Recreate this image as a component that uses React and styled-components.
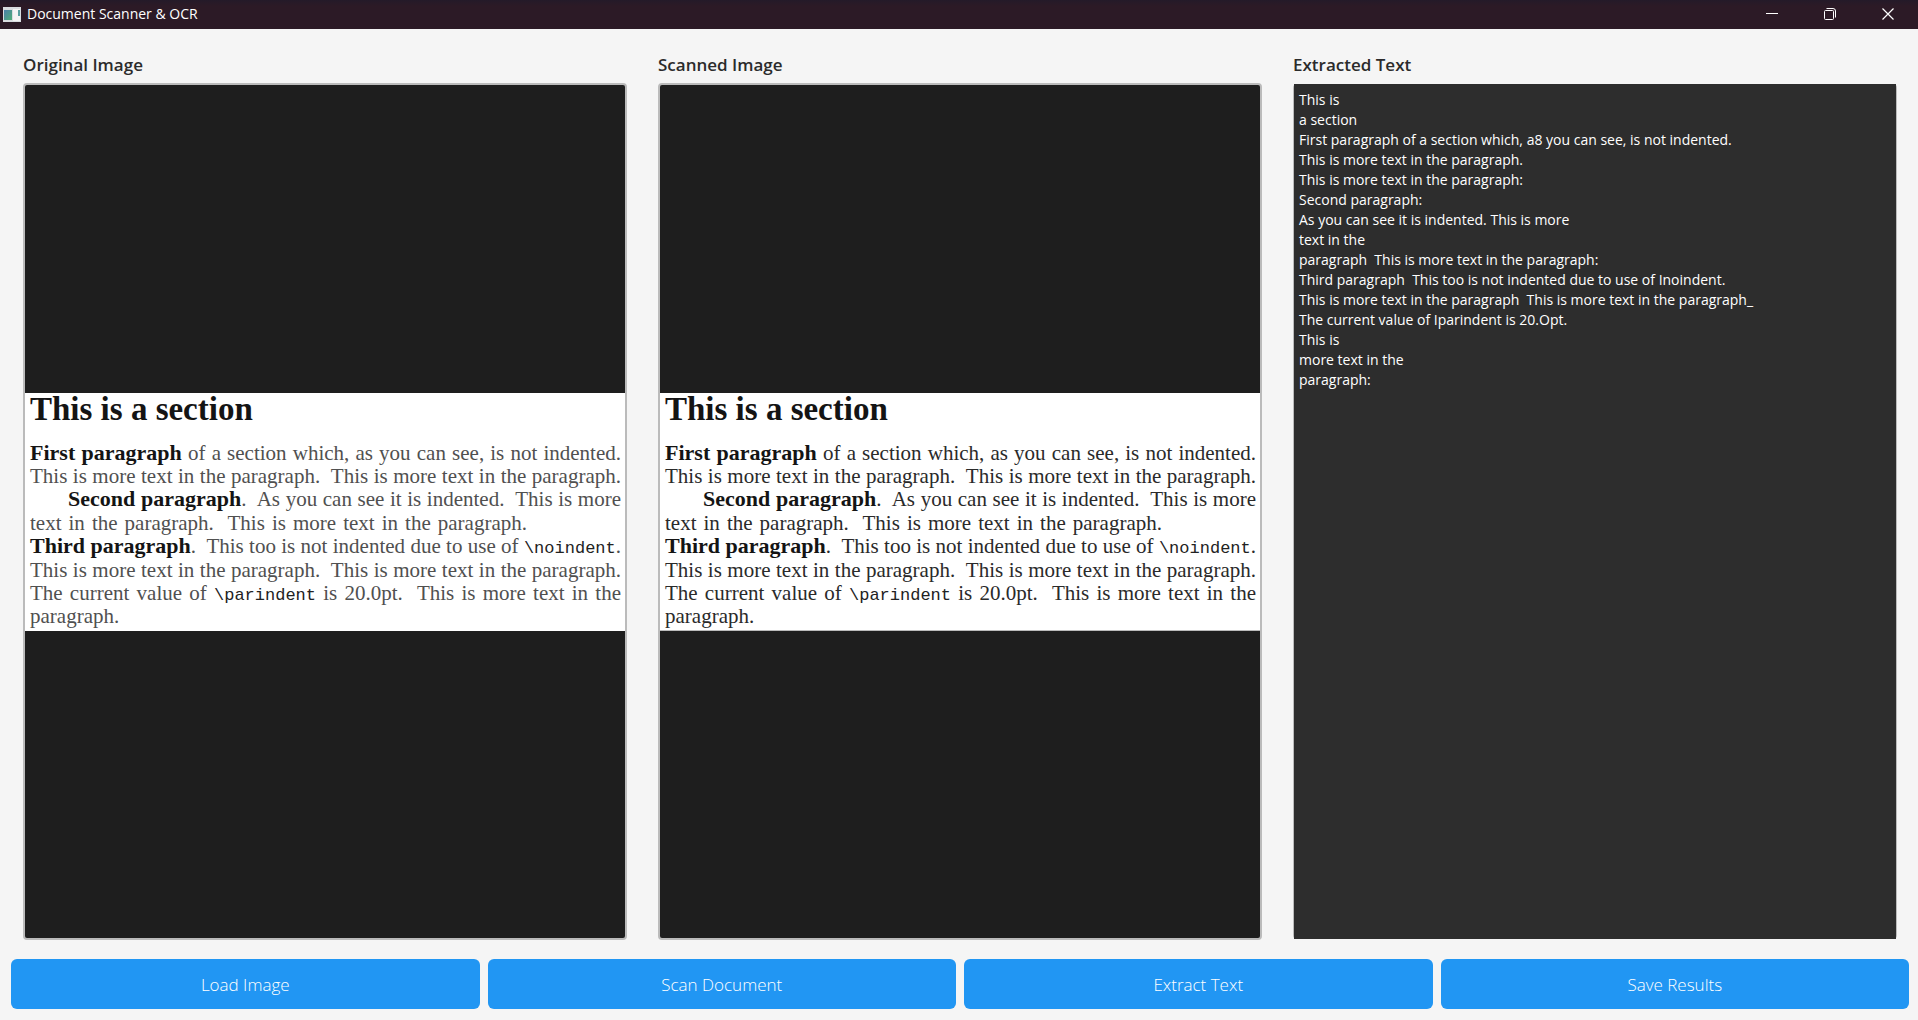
import React from "react";
import styled, { createGlobalStyle } from "styled-components";

const GlobalStyle = createGlobalStyle`
  *, *::before, *::after { box-sizing: border-box; }
  body {
    margin: 0;
    background: #f5f5f5;
    font-family: "Open Sans", "Noto Sans", sans-serif;
  }
`;

const Window = styled.div`
  display: flex;
  flex-direction: column;
  min-height: 100vh;
`;

const TitleBar = styled.header`
  display: flex;
  align-items: center;
  height: 29px;
  padding: 0 1px 1px 3px;
  background: linear-gradient(#241a29, #2c1a26 6px);
  color: #ffffff;
`;

const AppTitle = styled.h1`
  flex: 1;
  margin: 0 0 0 6px;
  font-size: 14px;
  font-weight: 400;
  line-height: 20px;
`;

const WindowButton = styled.button`
  display: flex;
  align-items: center;
  justify-content: center;
  width: 58px;
  height: 28px;
  padding: 0;
  border: 0;
  background: transparent;
  color: #ffffff;
`;

const Panels = styled.main`
  flex: 1;
  display: grid;
  grid-template-columns: repeat(3, minmax(0, 1fr));
  gap: 31px;
  padding: 24px 21px 19px 23px;
`;

const Panel = styled.section`
  display: flex;
  flex-direction: column;
`;

const PanelTitle = styled.h2`
  margin: 0 0 6px;
  color: #2b2b2b;
  font-size: 17px;
  font-weight: 650;
  line-height: 24px;
`;

const ImageFrame = styled.div`
  flex: 1;
  display: flex;
  align-items: center;
  border: 2px solid #bbbbbb;
  border-radius: 4px;
  background: #1e1e1e;
`;

const Page = styled.article`
  flex: 1;
  height: 238px;
  padding: 0 4px 0 5px;
  border-bottom: 1px solid ${(p) => (p.$scanned ? "#bbbbbb" : "#ffffff")};
  background: #ffffff;
  color: ${(p) => (p.$scanned ? "#2a2a2a" : "#505050")};
  font-family: "Liberation Serif", serif;
  font-size: 21px;
`;

const PageHeading = styled.h3`
  margin: 0;
  height: 49px;
  color: #141414;
  font-size: 33px;
  font-weight: 700;
  line-height: 32px;
`;

const PageBody = styled.div`
  display: grid;
  grid-auto-rows: 1fr;
  height: 187px;
  align-items: center;
`;

const PageLine = styled.div`
  line-height: 23px;
  white-space: nowrap;
  padding-left: ${(p) => (p.$indent ? "38px" : "0")};
  padding-right: ${(p) => (p.$short ? "94px" : "0")};
  text-align: justify;
  text-align-last: ${(p) => (p.$last ? "left" : "justify")};
`;

const Strong = styled.strong`
  color: #141414;
  font-size: 22px;
  line-height: 1;
`;

const Code = styled.code`
  color: #222222;
  font-family: "Liberation Mono", monospace;
  font-size: 17px;
  line-height: 1;
`;

const TextFrame = styled.div`
  flex: 1;
  display: flex;
  margin: 1px 0;
  padding: 0 1px;
  border-radius: 4px;
  background: #bbbbbb;
`;

const ExtractedText = styled.textarea`
  flex: 1;
  min-width: 0;
  padding: 6px 5px;
  border: 0;
  outline: 0;
  resize: none;
  background: #2d2d2d;
  color: #ffffff;
  font-family: inherit;
  font-size: 14px;
  line-height: 20px;
`;

const Actions = styled.footer`
  display: grid;
  grid-template-columns: repeat(4, minmax(0, 1fr));
  gap: 8px;
  padding: 0 9px 11px 11px;
`;

const ActionButton = styled.button`
  height: 50px;
  border: 0;
  border-radius: 6px;
  background: #2196f3;
  color: #ffffff;
  font-family: inherit;
  font-size: 17px;
  font-weight: 350;
`;

const extracted = [
  "This is",
  "a section",
  "First paragraph of a section which, a8 you can see, is not indented.",
  "This is more text in the paragraph.",
  "This is more text in the paragraph:",
  "Second paragraph:",
  "As you can see it is indented. This is more",
  "text in the",
  "paragraph  This is more text in the paragraph:",
  "Third paragraph  This too is not indented due to use of Inoindent.",
  "This is more text in the paragraph  This is more text in the paragraph_",
  "The current value of Iparindent is 20.Opt.",
  "This is",
  "more text in the",
  "paragraph:",
].join("\n");

function AppIcon() {
  return (
    <svg width="18" height="15" viewBox="0 0 18 15" aria-hidden="true">
      <defs>
        <linearGradient id="pane" x1="0" y1="0" x2="1" y2="1">
          <stop offset="0" stopColor="#4a7fa8" />
          <stop offset="1" stopColor="#4fae78" />
        </linearGradient>
      </defs>
      <rect width="18" height="15" fill="#d9dde0" />
      <rect x="1" y="3" width="8" height="10" fill="url(#pane)" />
      <rect x="10" y="2" width="7" height="12" fill="#f4f4f4" />
      <rect x="15" y="3" width="2" height="6" fill="#5a9fa0" />
    </svg>
  );
}

function ScannedPage({ scanned }) {
  return (
    <Page $scanned={scanned}>
      <PageHeading>This is a section</PageHeading>
      <PageBody>
        <PageLine>
          <Strong>First paragraph</Strong> of a section which, as you can see, is not indented.
        </PageLine>
        <PageLine>This is more text in the paragraph.&nbsp; This is more text in the paragraph.</PageLine>
        <PageLine $indent>
          <Strong>Second paragraph</Strong>.&nbsp; As you can see it is indented.&nbsp; This is more
        </PageLine>
        <PageLine $short>text in the paragraph.&nbsp; This is more text in the paragraph.</PageLine>
        <PageLine>
          <Strong>Third paragraph</Strong>.&nbsp; This too is not indented due to use of <Code>\noindent</Code>.
        </PageLine>
        <PageLine>This is more text in the paragraph.&nbsp; This is more text in the paragraph.</PageLine>
        <PageLine>
          The current value of <Code>\parindent</Code> is 20.0pt.&nbsp; This is more text in the
        </PageLine>
        <PageLine $last>paragraph.</PageLine>
      </PageBody>
    </Page>
  );
}

export default function App() {
  return (
    <Window>
      <GlobalStyle />
      <TitleBar>
        <AppIcon />
        <AppTitle>Document Scanner &amp; OCR</AppTitle>
        <WindowButton aria-label="Minimize">
          <svg width="12" height="12" viewBox="0 0 12 12" stroke="currentColor">
            <path d="M0 5.5H12" />
          </svg>
        </WindowButton>
        <WindowButton aria-label="Restore">
          <svg width="12" height="12" viewBox="0 0 12 12" fill="none" stroke="currentColor">
            <rect x="0.5" y="2.5" width="9" height="9" rx="1" />
            <path d="M2.5 0.5H9A2.5 2.5 0 0 1 11.5 3V9.5" />
          </svg>
        </WindowButton>
        <WindowButton aria-label="Close">
          <svg width="12" height="12" viewBox="0 0 12 12" stroke="currentColor" strokeWidth="1.2">
            <path d="M0.5 0.5L11.5 11.5M11.5 0.5L0.5 11.5" />
          </svg>
        </WindowButton>
      </TitleBar>
      <Panels>
        <Panel>
          <PanelTitle>Original Image</PanelTitle>
          <ImageFrame>
            <ScannedPage />
          </ImageFrame>
        </Panel>
        <Panel>
          <PanelTitle>Scanned Image</PanelTitle>
          <ImageFrame>
            <ScannedPage scanned />
          </ImageFrame>
        </Panel>
        <Panel>
          <PanelTitle as="label" htmlFor="extracted">Extracted Text</PanelTitle>
          <TextFrame>
            <ExtractedText id="extracted" spellCheck={false} defaultValue={extracted} />
          </TextFrame>
        </Panel>
      </Panels>
      <Actions>
        <ActionButton>Load Image</ActionButton>
        <ActionButton>Scan Document</ActionButton>
        <ActionButton>Extract Text</ActionButton>
        <ActionButton>Save Results</ActionButton>
      </Actions>
    </Window>
  );
}
